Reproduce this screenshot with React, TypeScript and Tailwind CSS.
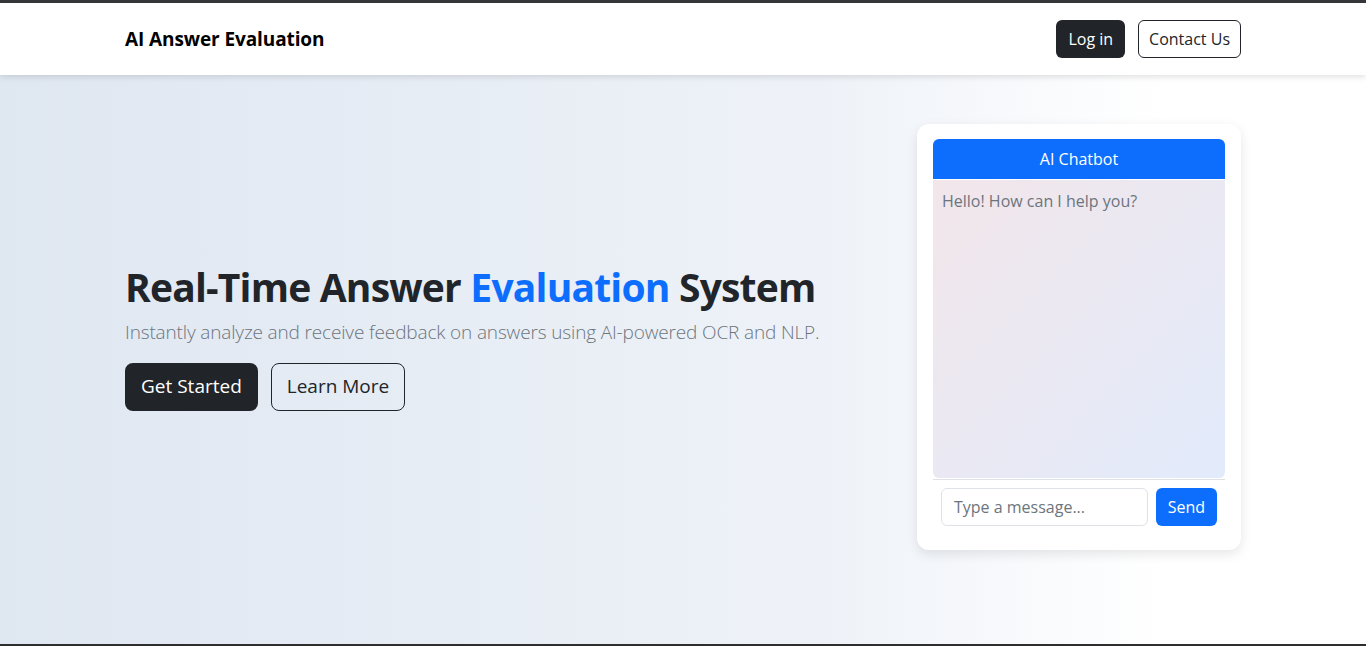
export default function App() {
  return (
    <div className="min-h-screen flex flex-col bg-white font-['Open_Sans',sans-serif] text-[#212529]">
      <div className="h-[3px] bg-[#36373b]" />

      <nav className="bg-white h-[72px] shadow-[0_2px_6px_rgba(0,0,0,0.12)] relative z-10">
        <div className="w-[1116px] mx-auto h-full flex items-center justify-between">
          <div className="text-[19px] font-bold text-black tracking-[-0.1px]">AI Answer Evaluation</div>
          <div className="flex items-center gap-[13px]">
            <button className="h-[38px] px-3 rounded-md bg-[#212529] text-white text-[16px]">Log in</button>
            <button className="h-[38px] px-[10px] rounded-md border border-[#212529] text-[#212529] text-[16px] bg-white">
              Contact Us
            </button>
          </div>
        </div>
      </nav>

      <main className="flex-1 bg-gradient-to-r from-[#dfe7f1] via-[#eef2f8] via-60% to-white to-85%">
        <div className="w-[1116px] mx-auto pt-[49px] flex items-center justify-between">
          <div className="flex flex-col">
            <h1 className="text-[39px] font-bold leading-tight tracking-[-0.8px] text-[#212529]">
              Real-Time Answer <span className="text-[#0d6efd]">Evaluation</span> System
            </h1>
            <p className="text-[19px] font-light text-[#6c757d] tracking-[-0.15px] mt-[6px]">
              Instantly analyze and receive feedback on answers using AI-powered OCR and NLP.
            </p>
            <div className="flex gap-[13px] mt-4">
              <button className="h-[48px] px-4 rounded-lg bg-[#212529] text-white text-[19px]">Get Started</button>
              <button className="h-[48px] px-[15px] rounded-lg border border-[#212529] text-[#212529] text-[19px]">
                Learn More
              </button>
            </div>
          </div>

          <div className="w-[324px] bg-white rounded-xl shadow-[0_4px_12px_rgba(0,0,0,0.1)] pt-[15px] px-4 pb-4">
            <div className="h-[40px] bg-[#0d6efd] rounded-t-md flex items-center justify-center text-white text-[16px]">
              AI Chatbot
            </div>
            <div className="h-[298px] mt-px rounded-b-md bg-gradient-to-br from-[#f2e6ea] to-[#e2ebfb] p-[9px] text-[16px] text-[#6c757d]">
              Hello! How can I help you?
            </div>
            <div className="border-t border-[#dee2e6] mt-px py-2 px-2 flex gap-2">
              <input
                className="flex-1 min-w-0 h-[38px] border border-[#dee2e6] rounded-md px-3 text-[16px] placeholder:text-[#6c757d] outline-none"
                placeholder="Type a message..."
              />
              <button className="h-[38px] px-3 rounded-md bg-[#0d6efd] text-white text-[16px]">Send</button>
            </div>
          </div>
        </div>
      </main>

      <div className="h-[2px] bg-[#2e2e2e]" />
    </div>
  );
}
